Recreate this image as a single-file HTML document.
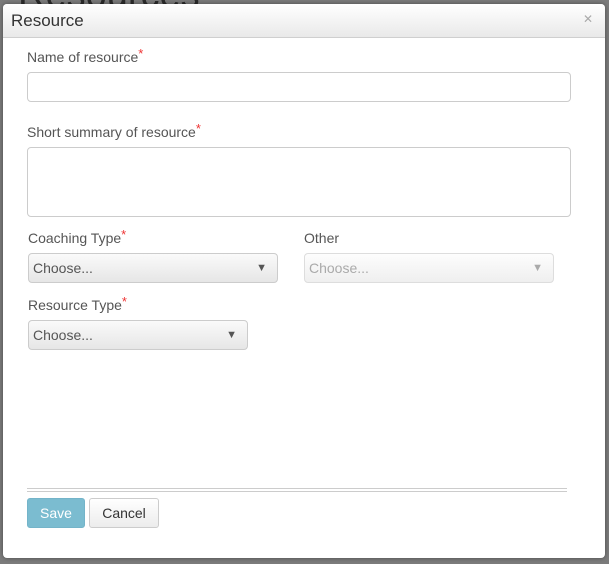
<!DOCTYPE html>
<html><head><style>
body{margin:0;width:609px;height:564px;background:#7b7b7b;position:relative;overflow:hidden;font-family:"Liberation Sans",sans-serif}
.bgt{position:absolute;left:18px;top:-26px;font-size:38px;color:#2a2a2a}
.modal{position:absolute;left:3px;top:4px;width:602px;height:554px;background:#fff;border-radius:4px;box-shadow:0 0 4px rgba(0,0,0,.4)}
.hd{height:33px;border-bottom:1px solid #cfcfcf;background:linear-gradient(#fff,#e9e9e9);border-radius:4px 4px 0 0;position:relative}
.hd span{position:absolute;left:8px;top:7px;font-size:17px;color:#333}
.hd i{position:absolute;right:12px;top:8px;font-style:normal;color:#aaa;font-size:12px}
.l{position:absolute;font-size:14px;color:#555}
.l b{color:#e33;font-weight:normal;font-size:13px;vertical-align:top;position:relative;top:-3px}
.in{position:absolute;border:1px solid #ccc;border-radius:4px;box-sizing:border-box;background:#fff}
.sel{position:absolute;border:1px solid #ccc;border-radius:4px;box-sizing:border-box;background:linear-gradient(#fafafa,#e6e6e6);font-size:14px;color:#555;padding:6px 0 0 4px;height:30px}
.sel:after{content:"▼";position:absolute;right:10px;top:8px;font-size:11px;color:#555}
.sel.d{color:#aaa;background:linear-gradient(#fdfdfd,#efefef);border-color:#ddd}
.sel.d:after{color:#aaa}
.btn{position:absolute;top:494px;height:30px;box-sizing:border-box;border-radius:3px;font-size:14px;text-align:center;padding-top:6px}
</style></head><body>
<div class="bgt">Resources</div>
<div class="modal">
<div class="hd"><span>Resource</span><i>✕</i></div>
<div class="l" style="left:24px;top:45px">Name of resource<b>*</b></div>
<div class="in" style="left:24px;top:68px;width:544px;height:30px"></div>
<div class="l" style="left:24px;top:120px">Short summary of resource<b>*</b></div>
<div class="in" style="left:24px;top:143px;width:544px;height:70px"></div>
<div class="l" style="left:25px;top:226px">Coaching Type<b>*</b></div>
<div class="l" style="left:301px;top:226px">Other</div>
<div class="sel" style="left:25px;top:249px;width:250px">Choose...</div>
<div class="sel d" style="left:301px;top:249px;width:250px">Choose...</div>
<div class="l" style="left:25px;top:293px">Resource Type<b>*</b></div>
<div class="sel" style="left:25px;top:316px;width:220px">Choose...</div>
<div style="position:absolute;left:24px;top:484px;width:540px;height:1px;background:#ccc"></div>
<div style="position:absolute;left:24px;top:487px;width:540px;height:1px;background:#ccc"></div>
<div class="btn" style="left:24px;width:58px;background:#7bbcd0;color:#fff;border:1px solid #74b4c9">Save</div>
<div class="btn" style="left:86px;width:70px;background:linear-gradient(#fff,#ececec);color:#333;border:1px solid #ccc">Cancel</div>
</div>
</body></html>
